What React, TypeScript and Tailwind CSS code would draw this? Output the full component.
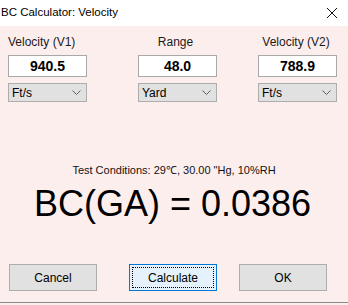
import React from 'react';

const FONT = "font-['Liberation_Sans',Arial,sans-serif]";

const Chevron = () => (
  <svg width="9" height="6" viewBox="0 0 9 6" className="text-[#606060]">
    <path d="M0.5 0.5 L4.5 4.5 L8.5 0.5" fill="none" stroke="currentColor" strokeWidth="1" />
  </svg>
);

interface FieldProps {
  label: string;
  value: string;
  unit: string;
  labelClass: string;
  className?: string;
}

const Field: React.FC<FieldProps> = ({ label, value, unit, labelClass, className }) => (
  <div className={`w-[79px] flex flex-col ${className || ''}`}>
    <div className={`text-[12px] leading-[14px] text-[#1a1a1a] whitespace-nowrap ${labelClass}`}>{label}</div>
    <div className="mt-[6px] h-[22px] bg-white border border-[#a8a8a8] flex items-center justify-center text-[14px] font-bold text-black">
      {value}
    </div>
    <div className="mt-[6px] h-[19px] bg-[#e1e1e1] border border-[#adadad] flex items-center justify-between pl-[3px] pr-[5px] text-[12px] text-black">
      <span>{unit}</span>
      <Chevron />
    </div>
  </div>
);

export default function App() {
  return (
    <div className={`w-[348px] h-[305px] bg-[#fdeeee] flex flex-col ${FONT}`}>
      {/* Title bar */}
      <div className="h-[26px] bg-white flex items-center justify-between pl-[1px] pr-[10px]">
        <span className="text-[11.5px] text-black">BC Calculator: Velocity</span>
        <svg width="12" height="12" viewBox="0 0 12 12">
          <path d="M1 1 L11 11 M11 1 L1 11" stroke="#111" strokeWidth="1" />
        </svg>
      </div>

      <div className="flex pt-[9px]">
        <Field className="ml-[8px]" label="Velocity (V1)" value="940.5" unit="Ft/s" labelClass="text-left" />
        <Field className="ml-[51px]" label="Range" value="48.0" unit="Yard" labelClass="text-center pr-[4px]" />
        <Field className="ml-[41px]" label="Velocity (V2)" value="788.9" unit="Ft/s" labelClass="text-center pr-[3px]" />
      </div>

      <div className="mt-[62px] text-center text-[11px] leading-[13px] text-[#111]">
        Test Conditions: 29℃, 30.00 "Hg, 10%RH
      </div>
      <div className="mt-[9px] text-center text-[36px] leading-none text-black pr-[3px]">
        BC(GA) = 0.0386
      </div>

      <div className="mt-[42px] flex text-[12px] text-black">
        <button className="ml-[9px] w-[88px] h-[27px] bg-[#e1e1e1] border border-[#adadad]">Cancel</button>
        <button className="ml-[32px] w-[88px] h-[27px] bg-[#e5f1fb] border border-[#0078d7] p-[2px]">
          <div className="w-full h-full border border-dotted border-black flex items-center justify-center">Calculate</div>
        </button>
        <button className="ml-[22px] w-[88px] h-[27px] bg-[#e1e1e1] border border-[#adadad]">OK</button>
      </div>

      <div className="mt-[11px] h-[1px] bg-[#8a8a8a]" />
    </div>
  );
}
